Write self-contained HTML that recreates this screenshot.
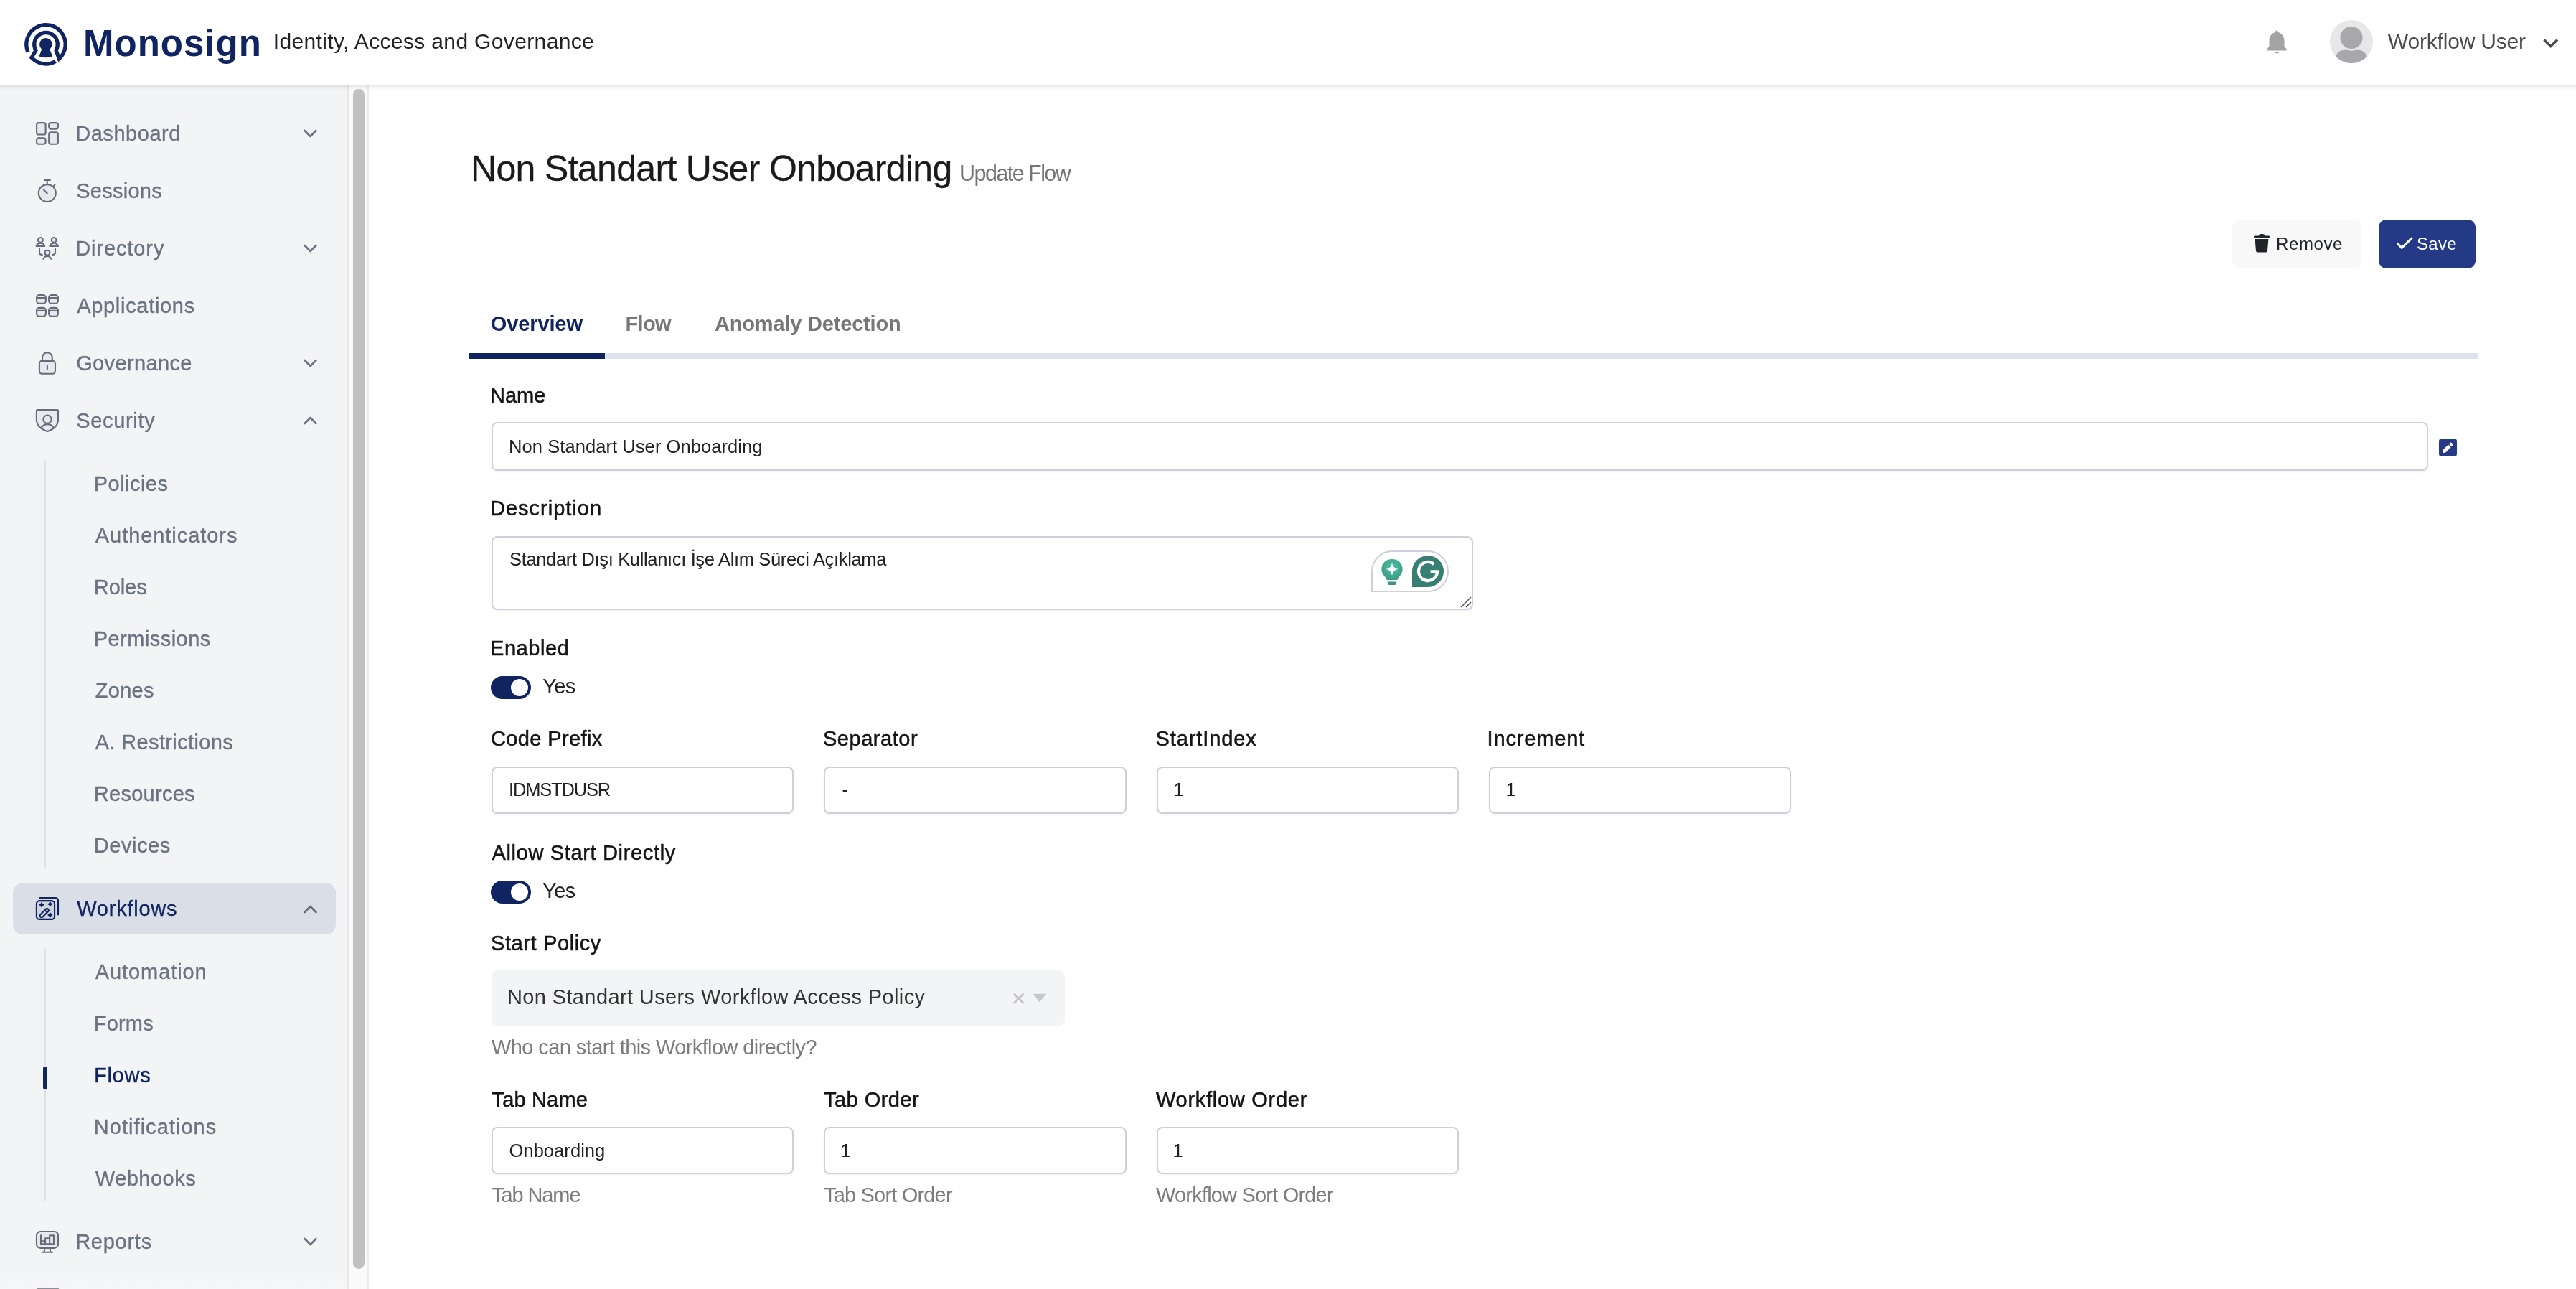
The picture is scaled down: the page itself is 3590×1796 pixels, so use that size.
<!DOCTYPE html>
<html><head><meta charset="utf-8"><title>Monosign</title>
<style>
html,body{margin:0;padding:0;}
body{width:3590px;height:1796px;overflow:hidden;position:relative;background:#fff;font-family:"Liberation Sans",sans-serif;}
.b{position:absolute;display:block;}
.t{position:absolute;white-space:nowrap;line-height:1;font-family:"Liberation Sans",sans-serif;}
</style></head><body>
<div class=b style="left:0px;top:0px;width:3590.00px;height:118.00px;background:#fff;"></div>
<div class=b style="left:0px;top:118px;width:3590.00px;height:9.00px;background:linear-gradient(to bottom, rgba(0,0,0,0.11), rgba(0,0,0,0.035) 40%, rgba(0,0,0,0));z-index:5;"></div>
<svg class=b style="left:30px;top:28px;" width="68" height="68" viewBox="0 0 68 68" ><path d="M9.11,44.78 A27.2,27.2 0 1 1 52.34,53.89 L48.06,42.05 A16.3,16.3 0 1 0 19.97,42.10 L14.04,52.28 A27.2,27.2 0 0 0 47.48,57.43" fill="none" stroke="#0f2461" stroke-width="5.3" stroke-linejoin="miter"/><circle cx="33.8" cy="33.8" r="8.8" fill="#0f2461"/><path d="M28.6,39.5 L39.0,39.5 L43.0,50.6 Q33.8,54 24.5,50.6 Z" fill="#0f2461"/></svg>
<svg class=b style="left:3156px;top:40px;" width="34" height="36" viewBox="0 0 34 36" ><path d="M17,2.2 a1.6,1.6 0 0 1 1.6,1.6 v1.2 C24.5,6.2 27.5,11 27.5,17 V24.5 L31,29 Q31.3,30.6 29.6,30.6 H4.4 Q2.7,30.6 3,29 L6.5,24.5 V17 C6.5,11 9.5,6.2 15.4,5 V3.8 A1.6,1.6 0 0 1 17,2.2 Z" fill="#a3a3a6"/><path d="M13.2,32 H20.8 Q19.5,34.6 17,34.6 Q14.5,34.6 13.2,32 Z" fill="#a3a3a6"/></svg>
<svg class=b style="left:3247px;top:28px;" width="60" height="60" viewBox="0 0 60 60" ><defs><clipPath id="av"><circle cx="30" cy="30" r="30"/></clipPath></defs><circle cx="30" cy="30" r="30" fill="#e7e7e8"/><g clip-path="url(#av)"><circle cx="30" cy="24.5" r="15.6" fill="#a7a8ab"/><path d="M6,60 C6,45 17,41 22,40.5 Q30,45 38,40.5 C43,41 54,45 54,60 Z" fill="#a7a8ab"/></g></svg>
<svg class=b style="left:3540px;top:50px;" width="30" height="20" viewBox="0 0 30 20" ><path d="M5.5,5.5 L14.8,14.6 L24,5.5" fill="none" stroke="#4b4b4b" stroke-width="3.4"/></svg>
<div class=b style="left:0px;top:118px;width:484.00px;height:1678.00px;background:#f3f4f6;"></div>
<div class=b style="left:484px;top:118px;width:30.00px;height:1678.00px;background:#fafafa;border-left:2px solid #e8e8e8;border-right:2px solid #ebebeb;box-sizing:border-box;"></div>
<div class=b style="left:492px;top:124px;width:16.00px;height:1644.00px;background:#c1c1c1;border-radius:8px;"></div>
<div class=b style="left:17.6px;top:1230.3px;width:450.40px;height:71.70px;background:#dadee6;border-radius:14px;"></div>
<div class=b style="left:62px;top:642px;width:2.00px;height:567.50px;background:#dfe1e6;"></div>
<div class=b style="left:62px;top:1322px;width:2.00px;height:351.60px;background:#dfe1e6;"></div>
<div class=b style="left:60px;top:1486px;width:6.30px;height:32.00px;background:#0f2461;border-radius:4px;"></div>
<svg class=b style="left:44px;top:164px;" width="44" height="44" viewBox="0 0 44 44" ><g fill="none" stroke="#656d7b" stroke-width="2.1" stroke-linecap="round" stroke-linejoin="round"><g fill="#e8e9ec"><rect x="7.1" y="7.1" width="12.5" height="16.4" rx="2.6"/><rect x="24.2" y="7.1" width="12.7" height="8.6" rx="2.6"/><rect x="7.1" y="28.3" width="12.5" height="8.4" rx="2.6"/><rect x="24.2" y="20.3" width="12.7" height="16.4" rx="2.6"/></g></g></svg>
<svg class=b style="left:44px;top:244px;" width="44" height="44" viewBox="0 0 44 44" ><g fill="none" stroke="#656d7b" stroke-width="2.1" stroke-linecap="round" stroke-linejoin="round"><circle cx="21.8" cy="25.1" r="12" fill="#e8e9ec"/><path d="M18.1,7 H25.9 M21.8,7 V12.6 M30.4,15.6 L32.4,13.4 M16.8,20.2 L21.8,25.4"/></g></svg>
<svg class=b style="left:44px;top:324px;" width="44" height="44" viewBox="0 0 44 44" ><g fill="none" stroke="#656d7b" stroke-width="2.1" stroke-linecap="round" stroke-linejoin="round"><g fill="#e8e9ec"><circle cx="12.4" cy="10.4" r="3.4"/><circle cx="31.2" cy="10.4" r="3.4"/><circle cx="21.9" cy="28.3" r="3.5"/></g><path d="M6.6,19 C7.4,16.2 9.6,14.8 12.4,14.8 C15.2,14.8 17.4,16.2 18.2,19 Z M25.4,19 C26.2,16.2 28.4,14.8 31.2,14.8 C34,14.8 36.2,16.2 37,19 Z" fill="#e8e9ec"/><path d="M16.4,36.9 C17.6,34.4 19.5,33 21.9,33 C24.3,33 26.2,34.4 27.4,36.9"/><path d="M11,22.4 V27.6 C11,29.8 12.4,31.1 14.9,31.1 M33,22.4 V27.6 C33,29.8 31.6,31.1 29.1,31.1"/></g></svg>
<svg class=b style="left:44px;top:404px;" width="44" height="44" viewBox="0 0 44 44" ><g fill="none" stroke="#656d7b" stroke-width="2.1" stroke-linecap="round" stroke-linejoin="round"><rect x="7.1" y="7.1" width="12.8" height="11.8" rx="3.6" fill="#e8e9ec"/><path d="M7.1,11.0 H19.9"/><rect x="24.1" y="7.1" width="12.8" height="11.8" rx="3.6" fill="#e8e9ec"/><path d="M24.1,11.0 H36.900000000000006"/><rect x="7.1" y="24.9" width="12.8" height="11.8" rx="3.6" fill="#e8e9ec"/><path d="M7.1,28.799999999999997 H19.9"/><rect x="24.1" y="24.9" width="12.8" height="11.8" rx="3.6" fill="#e8e9ec"/><path d="M24.1,28.799999999999997 H36.900000000000006"/></g></svg>
<svg class=b style="left:44px;top:484px;" width="44" height="44" viewBox="0 0 44 44" ><g fill="none" stroke="#656d7b" stroke-width="2.1" stroke-linecap="round" stroke-linejoin="round"><path d="M15,18.9 V14.1 A6.9,6.9 0 0 1 28.8,14.1 V18.9" fill="#e8e9ec"/><rect x="10.9" y="18.9" width="22.1" height="17.8" rx="3.6" fill="#e8e9ec"/><path d="M21.9,25.4 V30.4"/></g></svg>
<svg class=b style="left:44px;top:564px;" width="44" height="44" viewBox="0 0 44 44" ><g fill="none" stroke="#656d7b" stroke-width="2.1" stroke-linecap="round" stroke-linejoin="round"><path d="M6.9,8.2 Q6.9,7 8.1,7 H35.8 Q37,7 37,8.2 V20.4 C37,28.6 30.5,34.2 22.2,37 C13.6,34.2 6.9,28.6 6.9,20.4 Z" fill="#e8e9ec"/><circle cx="22" cy="20.2" r="5.6"/><path d="M13,32.4 C15.5,28.7 18.5,27.1 22,27.1 C25.6,27.1 28.6,28.7 31,32"/></g></svg>
<svg class=b style="left:44px;top:1244px;" width="44" height="44" viewBox="0 0 44 44" ><g fill="none" stroke="#0f2461" stroke-width="2.1" stroke-linecap="round" stroke-linejoin="round"><path d="M11.4,7 H33.6 A3.4,3.4 0 0 1 37,10.4 V30.4"/><rect x="6.9" y="11.1" width="25.2" height="25.8" rx="4.2" fill="#cfd4de"/><path d="M14,14.1 Q14.5,16.2 16.6,16.7 Q14.5,17.2 14,19.3 Q13.5,17.2 11.4,16.7 Q13.5,16.2 14,14.1 Z" fill="#0f2461" stroke-width="1.6"/><path d="M25.9,13.200000000000001 Q26.4,15.3 28.5,15.8 Q26.4,16.3 25.9,18.400000000000002 Q25.4,16.3 23.299999999999997,15.8 Q25.4,15.3 25.9,13.200000000000001 Z" fill="#0f2461" stroke-width="1.6"/><path d="M25.9,28.299999999999997 Q26.4,30.4 28.5,30.9 Q26.4,31.4 25.9,33.5 Q25.4,31.4 23.299999999999997,30.9 Q25.4,30.4 25.9,28.299999999999997 Z" fill="#0f2461" stroke-width="1.6"/><path d="M12.4,30.2 L19.7,22.9 A2.2,2.2 0 0 1 23.1,26.1 L15.6,33.5 A2.2,2.2 0 0 1 12.4,30.2 Z" fill="#cfd4de"/><path d="M18.6,24.3 L21.6,27.4" stroke-width="1.6"/></g></svg>
<svg class=b style="left:44px;top:1708px;" width="44" height="44" viewBox="0 0 44 44" ><g fill="none" stroke="#656d7b" stroke-width="2.1" stroke-linecap="round" stroke-linejoin="round"><rect x="7" y="8" width="30" height="22.9" rx="5.2" fill="#e8e9ec"/><path d="M18.4,31 L17.6,36.4 M25.6,31 L26.4,36.4 M14.6,36.7 H29.4"/><path d="M13,13.2 V25.3 H31 V13.4 H25.2 V25.3 M25.2,17.4 H19.1 V25.3 M19.1,21.2 H13" fill="none"/></g></svg>
<svg class=b style="left:44px;top:1790px;" width="44" height="6" viewBox="0 0 44 6" ><rect x="7.5" y="5" width="30.5" height="20" rx="3.5" fill="#e8e9ec" stroke="#656d7b" stroke-width="2.2"/></svg>
<div class=b style="left:0px;top:1770px;width:484.00px;height:26.00px;background:linear-gradient(to bottom, rgba(243,244,246,0), rgba(255,255,255,0.25));"></div>
<svg class=b style="left:421.5px;top:179px;" width="21" height="14" viewBox="0 0 21 14" ><path d="M2.6,3 L10.5,11 L18.4,3" fill="none" stroke="#6b7280" stroke-width="2.7" stroke-linecap="round" stroke-linejoin="round"/></svg>
<svg class=b style="left:421.5px;top:339px;" width="21" height="14" viewBox="0 0 21 14" ><path d="M2.6,3 L10.5,11 L18.4,3" fill="none" stroke="#6b7280" stroke-width="2.7" stroke-linecap="round" stroke-linejoin="round"/></svg>
<svg class=b style="left:421.5px;top:499px;" width="21" height="14" viewBox="0 0 21 14" ><path d="M2.6,3 L10.5,11 L18.4,3" fill="none" stroke="#6b7280" stroke-width="2.7" stroke-linecap="round" stroke-linejoin="round"/></svg>
<svg class=b style="left:421.5px;top:579px;" width="21" height="14" viewBox="0 0 21 14" ><path d="M2.6,11 L10.5,3 L18.4,11" fill="none" stroke="#6b7280" stroke-width="2.7" stroke-linecap="round" stroke-linejoin="round"/></svg>
<svg class=b style="left:421.5px;top:1259.5px;" width="21" height="14" viewBox="0 0 21 14" ><path d="M2.6,11 L10.5,3 L18.4,11" fill="none" stroke="#656d7b" stroke-width="2.7" stroke-linecap="round" stroke-linejoin="round"/></svg>
<svg class=b style="left:421.5px;top:1723px;" width="21" height="14" viewBox="0 0 21 14" ><path d="M2.6,3 L10.5,11 L18.4,3" fill="none" stroke="#6b7280" stroke-width="2.7" stroke-linecap="round" stroke-linejoin="round"/></svg>
<div class=b style="left:3111px;top:306px;width:180.00px;height:68.00px;background:#f8f8f8;border-radius:11px;"></div>
<svg class=b style="left:3140px;top:325px;" width="24" height="28" viewBox="0 0 24 28" ><path d="M8.2,2.6 Q8.6,1 10.3,1 H13.7 Q15.4,1 15.8,2.6 L16.1,3.4 H21.7 Q23,3.4 23,4.7 V5.2 Q23,6.3 21.8,6.3 H2.2 Q1,6.3 1,5.2 V4.7 Q1,3.4 2.3,3.4 H7.9 Z" fill="#212529"/><path d="M2.6,8 H21.4 L20,24.6 Q19.8,26.6 17.8,26.6 H6.2 Q4.2,26.6 4,24.6 Z" fill="#212529"/></svg>
<div class=b style="left:3315px;top:306px;width:135.00px;height:68.00px;background:#243a87;border-radius:11px;"></div>
<svg class=b style="left:3338px;top:329px;" width="26" height="20" viewBox="0 0 26 20" ><path d="M3.5,10.5 L9.2,16.3 L22.8,3.2" fill="none" stroke="#fff" stroke-width="3.2" stroke-linecap="round" stroke-linejoin="round"/></svg>
<div class=b style="left:654px;top:492px;width:2799.70px;height:8.00px;background:#dfe3eb;"></div>
<div class=b style="left:654px;top:492px;width:189.00px;height:8.00px;background:#0f2461;"></div>
<div class=b style="left:684.5px;top:588px;width:2699.50px;height:67.50px;background:#fff;border:2px solid #cdd0d9;border-radius:8px;box-sizing:border-box;box-shadow:0 2px 3px rgba(0,0,0,0.04);"></div>
<div class=b style="left:3399.4px;top:611px;width:24.60px;height:25.00px;background:#253a87;border-radius:4px;"></div>
<svg class=b style="left:3399.4px;top:611px;" width="24.6" height="25" viewBox="0 0 24.6 25" ><path d="M5,19.7 Q4.8,16.8 6.5,15 L12.9,8.6 L16.6,12.3 L10.2,18.7 Q8.4,20.5 5,19.7 Z" fill="#fff"/><path d="M14,7.5 L15.6,5.9 Q16.7,4.9 17.8,5.9 L19.3,7.4 Q20.3,8.5 19.3,9.6 L17.7,11.2 Z" fill="#fff"/></svg>
<div class=b style="left:684.5px;top:746.5px;width:1368.50px;height:103.00px;background:#fff;border:2px solid #cdd0d9;border-radius:8px;box-sizing:border-box;box-shadow:0 2px 3px rgba(0,0,0,0.04);"></div>
<div class=b style="left:1910.5px;top:766.7px;width:108.90px;height:58.50px;background:#fff;border:2px solid #cdd0dc;border-radius:29px 29px 29px 0;box-sizing:border-box;"></div>
<svg class=b style="left:1922px;top:776px;" width="36" height="42" viewBox="0 0 36 42" ><defs><radialGradient id="bg1" cx="0.5" cy="0.4" r="0.6"><stop offset="0" stop-color="#4fc1a3"/><stop offset="1" stop-color="#3a9c86"/></radialGradient></defs><path d="M18,3 C26.6,3 32.6,9 32.6,17 C32.6,22 30.2,25 27.4,28 L25.4,32 H10.6 L8.6,28 C5.8,25 3.4,22 3.4,17 C3.4,9 9.4,3 18,3 Z" fill="url(#bg1)"/><path d="M11.6,34.6 H24.4 L23.8,37.4 Q23.2,39 21.2,39 H14.8 Q12.8,39 12.2,37.4 Z" fill="#3e9480"/><path d="M18,8.2 Q19.2,15.8 26.4,17 Q19.2,18.2 18,25.8 Q16.8,18.2 9.6,17 Q16.8,15.8 18,8.2 Z" fill="#fff"/></svg>
<svg class=b style="left:1968px;top:774px;" width="44" height="44" viewBox="0 0 44 44" ><path d="M0,44 V22 A22,22 0 1 1 22,44 Z" fill="#377f72"/><path d="M30.36,12.04 A13,13 0 1 0 35,22.3 H25.6" fill="none" stroke="#fff" stroke-width="4.2"/></svg>
<svg class=b style="left:2034px;top:830px;" width="18" height="18" viewBox="0 0 18 18" ><path d="M2,16 L16,2 M9,16 L16,9" stroke="#555" stroke-width="1.5"/></svg>
<div class=b style="left:684px;top:942px;width:56.00px;height:32.00px;background:#0f2461;border-radius:16px;"></div><div class=b style="left:712px;top:946px;width:24.00px;height:24.00px;background:#fff;border-radius:50%;"></div>
<div class=b style="left:684.3px;top:1227px;width:56.00px;height:32.00px;background:#0f2461;border-radius:16px;"></div><div class=b style="left:712.3px;top:1231px;width:24.00px;height:24.00px;background:#fff;border-radius:50%;"></div>
<div class=b style="left:684.5px;top:1067.6px;width:421.80px;height:66.40px;background:#fff;border:2px solid #cdd0d9;border-radius:8px;box-sizing:border-box;box-shadow:0 2px 3px rgba(0,0,0,0.04);"></div>
<div class=b style="left:1148px;top:1067.6px;width:422.20px;height:66.40px;background:#fff;border:2px solid #cdd0d9;border-radius:8px;box-sizing:border-box;box-shadow:0 2px 3px rgba(0,0,0,0.04);"></div>
<div class=b style="left:1611.6px;top:1067.6px;width:421.10px;height:66.40px;background:#fff;border:2px solid #cdd0d9;border-radius:8px;box-sizing:border-box;box-shadow:0 2px 3px rgba(0,0,0,0.04);"></div>
<div class=b style="left:2074.6px;top:1067.6px;width:421.70px;height:66.40px;background:#fff;border:2px solid #cdd0d9;border-radius:8px;box-sizing:border-box;box-shadow:0 2px 3px rgba(0,0,0,0.04);"></div>
<div class=b style="left:684.5px;top:1351.2px;width:799.50px;height:79.20px;background:#f3f4f6;border-radius:10px;"></div>
<svg class=b style="left:1410px;top:1382px;" width="20" height="18" viewBox="0 0 20 18" ><path d="M3,2.5 L16.5,16 M16.5,2.5 L3,16" stroke="#c4c4c4" stroke-width="3"/></svg>
<svg class=b style="left:1438px;top:1383px;" width="22" height="15" viewBox="0 0 22 15" ><path d="M1.3,1.8 H20.3 L10.8,13.2 Z" fill="#c8c8c8"/></svg>
<div class=b style="left:684.5px;top:1569.6px;width:421.80px;height:66.40px;background:#fff;border:2px solid #cdd0d9;border-radius:8px;box-sizing:border-box;box-shadow:0 2px 3px rgba(0,0,0,0.04);"></div>
<div class=b style="left:1148px;top:1569.6px;width:422.20px;height:66.40px;background:#fff;border:2px solid #cdd0d9;border-radius:8px;box-sizing:border-box;box-shadow:0 2px 3px rgba(0,0,0,0.04);"></div>
<div class=b style="left:1611.6px;top:1569.6px;width:421.10px;height:66.40px;background:#fff;border:2px solid #cdd0d9;border-radius:8px;box-sizing:border-box;box-shadow:0 2px 3px rgba(0,0,0,0.04);"></div>
<div style="position:absolute;left:0;top:0;width:3590px;height:1796px;will-change:transform;">
<div class=t style="left:116.00px;top:34.83px;font-size:51px;font-weight:bold;color:#0f2461;letter-spacing:1.000px;">Monosign</div>
<div class=t style="left:380.70px;top:42.81px;font-size:30px;font-weight:normal;color:#222222;letter-spacing:0.357px;">Identity, Access and Governance</div>
<div class=t style="left:3327.80px;top:42.61px;font-size:30px;font-weight:normal;color:#4b4b4b;letter-spacing:-0.183px;">Workflow User</div>
<div class=t style="left:105.20px;top:172.45px;font-size:29px;font-weight:normal;color:#6b7280;letter-spacing:0.550px;-webkit-text-stroke:0.35px currentColor;">Dashboard</div>
<div class=t style="left:106.20px;top:252.45px;font-size:29px;font-weight:normal;color:#6b7280;letter-spacing:0.257px;-webkit-text-stroke:0.35px currentColor;">Sessions</div>
<div class=t style="left:105.20px;top:332.45px;font-size:29px;font-weight:normal;color:#6b7280;letter-spacing:0.900px;-webkit-text-stroke:0.35px currentColor;">Directory</div>
<div class=t style="left:107.20px;top:412.45px;font-size:29px;font-weight:normal;color:#6b7280;letter-spacing:0.691px;-webkit-text-stroke:0.35px currentColor;">Applications</div>
<div class=t style="left:106.20px;top:492.45px;font-size:29px;font-weight:normal;color:#6b7280;letter-spacing:0.367px;-webkit-text-stroke:0.35px currentColor;">Governance</div>
<div class=t style="left:106.20px;top:572.45px;font-size:29px;font-weight:normal;color:#6b7280;letter-spacing:0.686px;-webkit-text-stroke:0.35px currentColor;">Security</div>
<div class=t style="left:105.20px;top:1716.45px;font-size:29px;font-weight:normal;color:#6b7280;letter-spacing:0.733px;-webkit-text-stroke:0.35px currentColor;">Reports</div>
<div class=t style="left:107.20px;top:1252.45px;font-size:29px;font-weight:normal;color:#0f2461;letter-spacing:0.775px;-webkit-text-stroke:0.35px currentColor;">Workflows</div>
<div class=t style="left:130.80px;top:660.45px;font-size:29px;font-weight:normal;color:#6b7280;letter-spacing:0.457px;-webkit-text-stroke:0.35px currentColor;">Policies</div>
<div class=t style="left:132.80px;top:732.45px;font-size:29px;font-weight:normal;color:#6b7280;letter-spacing:0.938px;-webkit-text-stroke:0.35px currentColor;">Authenticators</div>
<div class=t style="left:130.80px;top:804.45px;font-size:29px;font-weight:normal;color:#6b7280;letter-spacing:-0.075px;-webkit-text-stroke:0.35px currentColor;">Roles</div>
<div class=t style="left:130.80px;top:876.45px;font-size:29px;font-weight:normal;color:#6b7280;letter-spacing:0.450px;-webkit-text-stroke:0.35px currentColor;">Permissions</div>
<div class=t style="left:132.80px;top:948.45px;font-size:29px;font-weight:normal;color:#6b7280;letter-spacing:0.250px;-webkit-text-stroke:0.35px currentColor;">Zones</div>
<div class=t style="left:132.80px;top:1020.45px;font-size:29px;font-weight:normal;color:#6b7280;letter-spacing:0.350px;-webkit-text-stroke:0.35px currentColor;">A. Restrictions</div>
<div class=t style="left:130.80px;top:1092.45px;font-size:29px;font-weight:normal;color:#6b7280;letter-spacing:0.275px;-webkit-text-stroke:0.35px currentColor;">Resources</div>
<div class=t style="left:130.80px;top:1164.45px;font-size:29px;font-weight:normal;color:#6b7280;letter-spacing:0.567px;-webkit-text-stroke:0.35px currentColor;">Devices</div>
<div class=t style="left:132.80px;top:1340.45px;font-size:29px;font-weight:normal;color:#6b7280;letter-spacing:0.911px;-webkit-text-stroke:0.35px currentColor;">Automation</div>
<div class=t style="left:130.80px;top:1412.45px;font-size:29px;font-weight:normal;color:#6b7280;letter-spacing:0.175px;-webkit-text-stroke:0.35px currentColor;">Forms</div>
<div class=t style="left:130.80px;top:1556.45px;font-size:29px;font-weight:normal;color:#6b7280;letter-spacing:1.042px;-webkit-text-stroke:0.35px currentColor;">Notifications</div>
<div class=t style="left:132.80px;top:1628.45px;font-size:29px;font-weight:normal;color:#6b7280;letter-spacing:0.486px;-webkit-text-stroke:0.35px currentColor;">Webhooks</div>
<div class=t style="left:131.00px;top:1484.45px;font-size:29px;font-weight:normal;color:#0f2461;letter-spacing:0.725px;-webkit-text-stroke:0.35px currentColor;">Flows</div>
<div class=t style="left:656.00px;top:209.98px;font-size:50px;font-weight:normal;color:#1a1a1a;letter-spacing:-0.667px;-webkit-text-stroke:0.3px currentColor;">Non Standart User Onboarding</div>
<div class=t style="left:1337.00px;top:225.78px;font-size:30.5px;font-weight:normal;color:#757575;letter-spacing:-1.540px;">Update Flow</div>
<div class=t style="left:3172.00px;top:327.98px;font-size:24px;font-weight:normal;color:#212529;letter-spacing:0.600px;">Remove</div>
<div class=t style="left:3368.00px;top:327.98px;font-size:24px;font-weight:normal;color:#ffffff;letter-spacing:0.333px;">Save</div>
<div class=t style="left:683.70px;top:436.75px;font-size:29px;font-weight:bold;color:#0f2461;letter-spacing:-0.100px;">Overview</div>
<div class=t style="left:871.40px;top:436.75px;font-size:29px;font-weight:bold;color:#777777;letter-spacing:-0.600px;">Flow</div>
<div class=t style="left:996.00px;top:436.75px;font-size:29px;font-weight:bold;color:#777777;letter-spacing:-0.188px;">Anomaly Detection</div>
<div class=t style="left:683.00px;top:536.85px;font-size:29px;font-weight:normal;color:#141414;letter-spacing:0.000px;-webkit-text-stroke:0.55px currentColor;">Name</div>
<div class=t style="left:709.00px;top:610.01px;font-size:25.5px;font-weight:normal;color:#222222;letter-spacing:0.074px;">Non Standart User Onboarding</div>
<div class=t style="left:683.00px;top:694.45px;font-size:29px;font-weight:normal;color:#141414;letter-spacing:1.000px;-webkit-text-stroke:0.55px currentColor;">Description</div>
<div class=t style="left:710.00px;top:767.01px;font-size:25.5px;font-weight:normal;color:#222222;letter-spacing:-0.340px;">Standart Dışı Kullanıcı İşe Alım Süreci Açıklama</div>
<div class=t style="left:683.00px;top:888.85px;font-size:29px;font-weight:normal;color:#141414;letter-spacing:0.567px;-webkit-text-stroke:0.55px currentColor;">Enabled</div>
<div class=t style="left:756.30px;top:942.15px;font-size:29px;font-weight:normal;color:#222222;letter-spacing:-0.650px;">Yes</div>
<div class=t style="left:684.00px;top:1014.95px;font-size:29px;font-weight:normal;color:#141414;letter-spacing:0.380px;-webkit-text-stroke:0.55px currentColor;">Code Prefix</div>
<div class=t style="left:1147.00px;top:1014.95px;font-size:29px;font-weight:normal;color:#141414;letter-spacing:0.525px;-webkit-text-stroke:0.55px currentColor;">Separator</div>
<div class=t style="left:1610.60px;top:1014.95px;font-size:29px;font-weight:normal;color:#141414;letter-spacing:0.878px;-webkit-text-stroke:0.55px currentColor;">StartIndex</div>
<div class=t style="left:2072.60px;top:1014.95px;font-size:29px;font-weight:normal;color:#141414;letter-spacing:0.825px;-webkit-text-stroke:0.55px currentColor;">Increment</div>
<div class=t style="left:709.00px;top:1087.61px;font-size:25.5px;font-weight:normal;color:#222222;letter-spacing:-1.162px;">IDMSTDUSR</div>
<div class=t style="left:1173.40px;top:1087.61px;font-size:25.5px;font-weight:normal;color:#222222;letter-spacing:0.000px;">-</div>
<div class=t style="left:1635.50px;top:1087.61px;font-size:25.5px;font-weight:normal;color:#222222;letter-spacing:0.000px;">1</div>
<div class=t style="left:2098.50px;top:1087.61px;font-size:25.5px;font-weight:normal;color:#222222;letter-spacing:0.000px;">1</div>
<div class=t style="left:685.40px;top:1174.35px;font-size:29px;font-weight:normal;color:#141414;letter-spacing:0.663px;-webkit-text-stroke:0.55px currentColor;">Allow Start Directly</div>
<div class=t style="left:756.30px;top:1227.15px;font-size:29px;font-weight:normal;color:#222222;letter-spacing:-0.650px;">Yes</div>
<div class=t style="left:684.00px;top:1299.85px;font-size:29px;font-weight:normal;color:#141414;letter-spacing:0.609px;-webkit-text-stroke:0.55px currentColor;">Start Policy</div>
<div class=t style="left:706.90px;top:1374.85px;font-size:29px;font-weight:normal;color:#333333;letter-spacing:0.385px;">Non Standart Users Workflow Access Policy</div>
<div class=t style="left:685.00px;top:1444.95px;font-size:29px;font-weight:normal;color:#7c7c7c;letter-spacing:-0.592px;">Who can start this Workflow directly?</div>
<div class=t style="left:685.50px;top:1517.85px;font-size:29px;font-weight:normal;color:#141414;letter-spacing:0.171px;-webkit-text-stroke:0.55px currentColor;">Tab Name</div>
<div class=t style="left:1148.00px;top:1517.85px;font-size:29px;font-weight:normal;color:#141414;letter-spacing:0.463px;-webkit-text-stroke:0.55px currentColor;">Tab Order</div>
<div class=t style="left:1611.00px;top:1517.85px;font-size:29px;font-weight:normal;color:#141414;letter-spacing:0.723px;-webkit-text-stroke:0.55px currentColor;">Workflow Order</div>
<div class=t style="left:709.50px;top:1590.91px;font-size:25.5px;font-weight:normal;color:#222222;letter-spacing:0.056px;">Onboarding</div>
<div class=t style="left:1171.60px;top:1590.91px;font-size:25.5px;font-weight:normal;color:#222222;letter-spacing:0.000px;">1</div>
<div class=t style="left:1634.60px;top:1590.91px;font-size:25.5px;font-weight:normal;color:#222222;letter-spacing:0.000px;">1</div>
<div class=t style="left:685.00px;top:1650.95px;font-size:29px;font-weight:normal;color:#7c7c7c;letter-spacing:-1.086px;">Tab Name</div>
<div class=t style="left:1148.00px;top:1650.95px;font-size:29px;font-weight:normal;color:#7c7c7c;letter-spacing:-0.815px;">Tab Sort Order</div>
<div class=t style="left:1611.00px;top:1650.95px;font-size:29px;font-weight:normal;color:#7c7c7c;letter-spacing:-0.811px;">Workflow Sort Order</div>
</div>
</body></html>
